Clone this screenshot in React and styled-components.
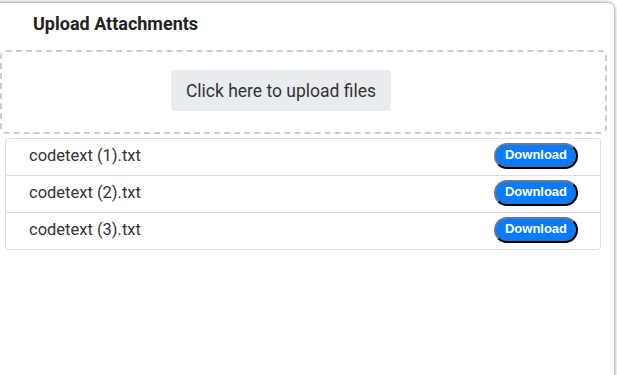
import React from 'react';
import styled, { createGlobalStyle } from 'styled-components';

const GlobalStyle = createGlobalStyle`
    body {
        margin: 0;
        background: #ffffff;
        font-family: Roboto, "Liberation Sans", sans-serif;
        overflow: hidden;
    }
`

const Page = styled.div`
    height: 375px;
    padding-top: 3px;
    box-sizing: border-box;
    overflow: hidden;
`
const Card = styled.section`
    margin-left: -10px;
    width: 624px;
    height: 400px;
    background: #ffffff;
    border-radius: 6px;
    box-shadow: 0 0 4px rgba(0, 0, 0, 0.55);
    padding-left: 10px;
    box-sizing: border-box;
`
const Title = styled.h2`
    margin: 0;
    padding: 10px 0 0 33px;
    height: 47px;
    box-sizing: border-box;
    font-size: 18px;
    font-weight: 700;
    color: #222;
`
const DropZone = styled.div`
    width: 607px;
    height: 84px;
    box-sizing: border-box;
    border: 2px dashed #cccccc;
    border-radius: 6px;
    display: flex;
    justify-content: center;
    align-items: center;
    padding: 0 45px 3px 0;
`
const UploadButton = styled.button`
    width: 220px;
    height: 41px;
    border: none;
    border-radius: 4px;
    background: #e9ecef;
    color: #333;
    font-family: inherit;
    font-size: 17.5px;
    padding: 0;
`
const FileList = styled.ul`
    list-style: none;
    margin: 4px 0 0 5px;
    padding: 0;
    width: 596px;
    border: 1px solid #dddddd;
    border-radius: 4px;
    box-sizing: border-box;
`
const FileRow = styled.li`
    height: 36px;
    display: flex;
    align-items: center;
    justify-content: space-between;
    padding: 0 22px 0 23px;
    border-top: ${p => (p.first ? 'none' : '1px solid #dddddd')};
    font-size: 16.5px;
    color: #333;
`
const FileName = styled.span`
    margin-top: -4px;
`
const DownloadButton = styled.button`
    width: 84px;
    height: 26px;
    border-radius: 13px;
    border: 2px outset #555;
    border-top-color: #777;
    border-left-color: #777;
    border-bottom-color: #222;
    border-right-color: #222;
    background: #0a7bff;
    color: #fff;
    font-family: "Liberation Sans", Arial, sans-serif;
    font-weight: 700;
    font-size: 13px;
    padding: 0 0 3px;
    margin-top: -2px;
`

const files = ['codetext (1).txt', 'codetext (2).txt', 'codetext (3).txt']

function App() {
    return (
        <Page>
            <GlobalStyle />
            <Card>
                <Title>Upload Attachments</Title>
                <DropZone>
                    <UploadButton>Click here to upload files</UploadButton>
                </DropZone>
                <FileList>
                    {files.map((f, i) => (
                        <FileRow key={f} first={i === 0}>
                            <FileName>{f}</FileName>
                            <DownloadButton>Download</DownloadButton>
                        </FileRow>
                    ))}
                </FileList>
            </Card>
        </Page>
    );
}

export default App;
